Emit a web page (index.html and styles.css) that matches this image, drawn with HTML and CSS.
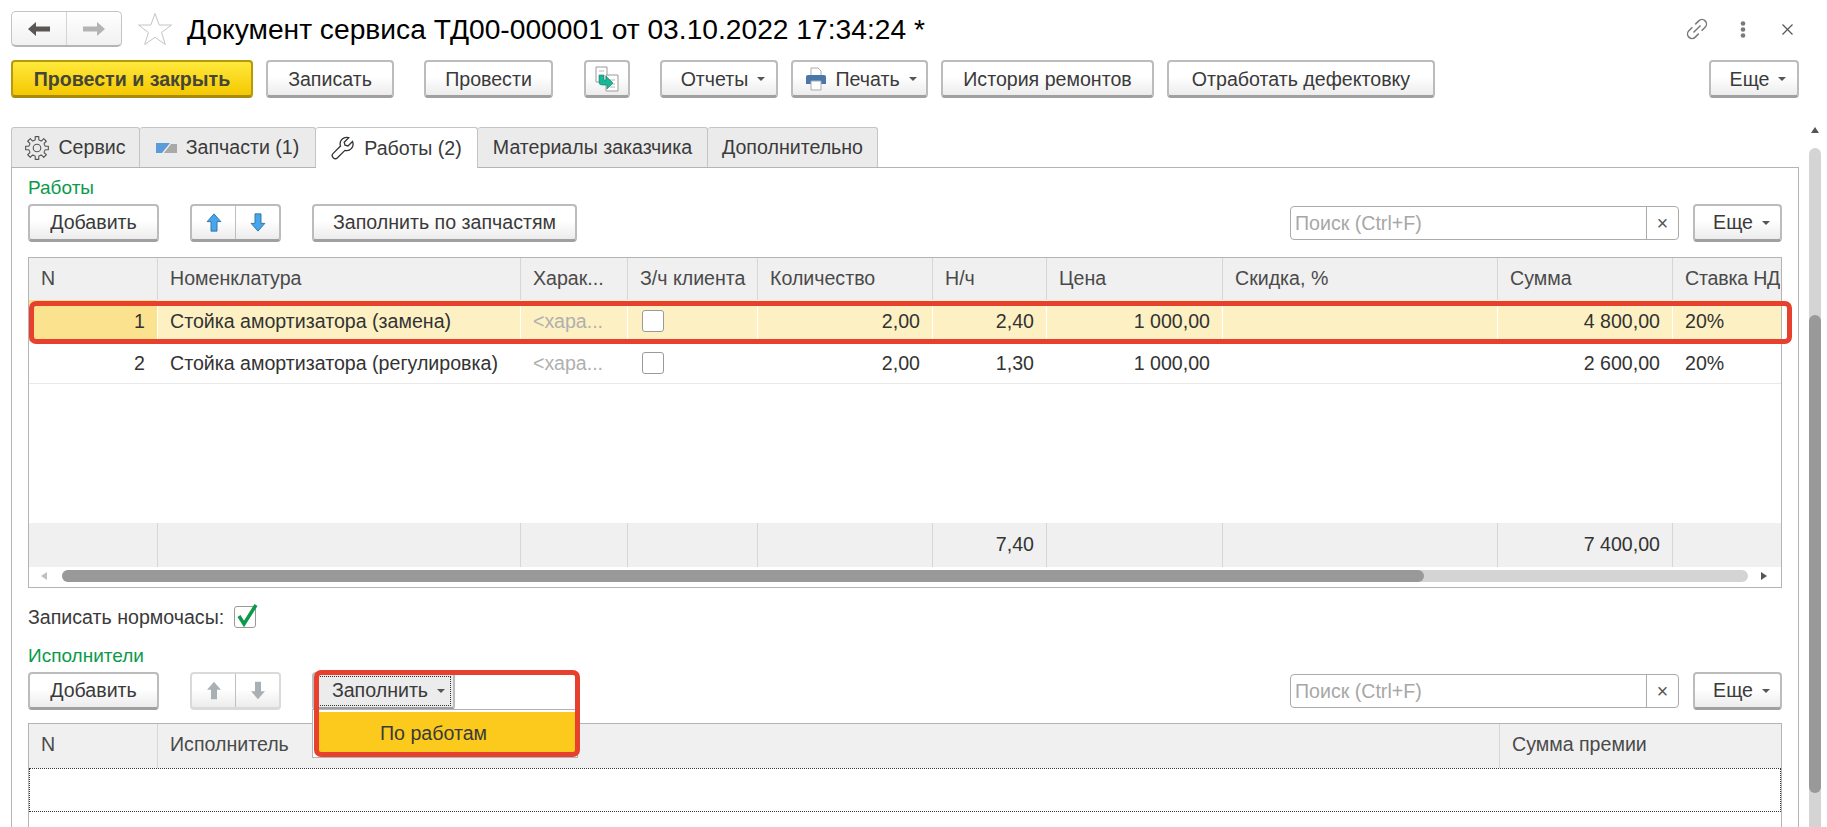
FILE: index.html
```html
<!DOCTYPE html>
<html lang="ru">
  <head>
    <meta charset="UTF-8" />
    <title>Документ сервиса ТД00-000001</title>
    <link rel="stylesheet" href="styles.css">
  </head>
  <body>
    <div class="form">
      <div class="title_row">
        <div class="nav_group">
          <span class="nav_btn">
            <svg width="22" height="14" viewBox="0 0 22 14"><path d="M0 7 8 0v4.500h14v5H8V14z" fill="#5a5654"/></svg>
          </span>
          <span class="nav_btn">
            <svg width="22" height="14" viewBox="0 0 22 14"><path d="M22 7 14 0v4.500H0v5h14V14z" fill="#b4b4b4"/></svg>
          </span>
        </div>
        <svg class="star" width="36" height="34" viewBox="0 0 36 34"><path d="M18 1.500 22.200 13H34.500L24.600 20.500 28.300 32.500 18 25.300 7.700 32.500 11.400 20.500 1.500 13H13.800z" fill="none" stroke="#c4c4c4"/></svg>
        <h1>Документ сервиса ТД00-000001 от 03.10.2022 17:34:24 *</h1>
        <div class="win_icons">
          <svg width="26" height="26" viewBox="0 0 26 26"><g transform="rotate(-45 13 13)" fill="none" stroke="#7a7a7a" stroke-width="1.500"><path d="M11 8.500H6a4.500 4.500 0 0 0 0 9h5"/><path d="M15 8.500h5a4.500 4.500 0 0 1 0 9h-5"/><path d="M8 13h10"/></g></svg>
          <svg width="6" height="17" viewBox="0 0 6 17"><g fill="#7a7a7a"><circle cx="3" cy="2.500" r="2.300"/><circle cx="3" cy="8.500" r="2.300"/><circle cx="3" cy="14.500" r="2.300"/></g></svg>
          <svg class="win_close" width="11" height="11" viewBox="0 0 11 11"><path d="M.5.500l10 10M10.500.500l-10 10" stroke="#555" stroke-width="1.200"/></svg>
        </div>
      </div>

      <div class="toolbar">
        <button class="btn btn_main w242">Провести и закрыть</button>
        <button class="btn ml13 w128">Записать</button>
        <button class="btn ml30 w129">Провести</button>
        <button class="btn ml31 w46">
          <svg width="26" height="26" viewBox="0 0 26 26">
            <path d="M2 1h11v15H2z" fill="#fff" stroke="#9a9a9a"/>
            <path d="M12 9h12v16H12z" fill="#fff" stroke="#9a9a9a"/>
            <path d="M5 5h5M16 14h5M16 18h5M16 21h5" stroke="#b5b5b5"/>
            <path d="M5 9h5v5h2v-4l7 7-6 6v-4H8q-3 0-3-3z" fill="#16b896" stroke="#1b7a66" stroke-width=".6"/>
          </svg>
        </button>
        <button class="btn ml30 w118 has_caret">Отчеты <i class="caret"></i></button>
        <button class="btn ml13 w137 print_btn">
          <svg width="22" height="24" viewBox="0 0 22 24">
            <path d="M6 1h7l3 3v7H6z" fill="#fff" stroke="#aaa"/>
            <path d="M1 10q0-2 2-2h16q2 0 2 2v7H1z" fill="#4a76a8"/>
            <path d="M6 14h10v9H6z" fill="#fff" stroke="#aaa"/>
          </svg>
          Печать <i class="caret"></i>
        </button>
        <button class="btn ml13 w213">История ремонтов</button>
        <button class="btn ml13 w268">Отработать дефектовку</button>
        <button class="btn w90 push has_caret">Еще <i class="caret"></i></button>
      </div>

      <div class="tabs">
        <div class="tab w129">
          <svg width="24" height="24" viewBox="0 0 24 24">
            <defs><path id="tooth" d="M8.940 4.610 10.230 3.690 10.200.640H13.800L13.770 3.690 15.060 4.610"/></defs>
            <g fill="none" stroke="#555" stroke-width="1.100" stroke-linejoin="round">
              <circle cx="12" cy="12" r="3.800"/>
              <use href="#tooth"/>
              <use href="#tooth" transform="rotate(45 12 12)"/>
              <use href="#tooth" transform="rotate(90 12 12)"/>
              <use href="#tooth" transform="rotate(135 12 12)"/>
              <use href="#tooth" transform="rotate(180 12 12)"/>
              <use href="#tooth" transform="rotate(225 12 12)"/>
              <use href="#tooth" transform="rotate(270 12 12)"/>
              <use href="#tooth" transform="rotate(315 12 12)"/>
            </g>
          </svg>
          Сервис
        </div>
        <div class="tab w176">
          <svg width="21" height="10" viewBox="0 0 21 10"><path d="M0 0h14L6 10H0z" fill="#5a9bd8"/><path d="M21 1v9H8l7-9z" fill="#a9a9a9"/></svg>
          Запчасти (1)
        </div>
        <div class="tab tab_on w162">
          <svg width="24" height="24" viewBox="0 0 24 24"><path d="M21.500 5.500 17 10l-3-.8-.8-3L17.700 1.700A6.500 6.500 0 0 0 9.500 10L2.200 17.400a3 3 0 0 0 4.300 4.300L13.900 14.400A6.500 6.500 0 0 0 21.500 5.500z" fill="#fff" stroke="#333" stroke-width="1.300"/></svg>
          Работы (2)
        </div>
        <div class="tab w230">Материалы заказчика</div>
        <div class="tab w170">Дополнительно</div>
      </div>

      <div class="panel">
        <div class="group_title">Работы</div>
        <div class="list_bar">
          <button class="btn w131">Добавить</button>
          <div class="btn_pair ml31">
            <span class="pair_btn">
              <svg width="16" height="19" viewBox="0 0 18 22"><path d="M9 1 17 10h-4.500v11h-7V10H1z" fill="#46a5ec" stroke="#2c6f9e"/></svg>
            </span>
            <span class="pair_btn">
              <svg width="16" height="19" viewBox="0 0 18 22"><path d="M9 21 1 12h4.500V1h7v11H17z" fill="#46a5ec" stroke="#2c6f9e"/></svg>
            </span>
          </div>
          <button class="btn ml31 w265">Заполнить по запчастям</button>
          <div class="search push">
            <span class="search_text">Поиск (Ctrl+F)</span>
            <span class="search_clear">×</span>
          </div>
          <button class="btn ml14 w89 has_caret">Еще <i class="caret"></i></button>
        </div>

        <div class="table work_table">
          <div class="row head">
            <div class="cell">N</div>
            <div class="cell">Номенклатура</div>
            <div class="cell">Харак...</div>
            <div class="cell">З/ч клиента</div>
            <div class="cell">Количество</div>
            <div class="cell">Н/ч</div>
            <div class="cell">Цена</div>
            <div class="cell">Скидка, %</div>
            <div class="cell">Сумма</div>
            <div class="cell last_head">Ставка НД</div>
          </div>
          <div class="row selected">
            <div class="cell num cur">1</div>
            <div class="cell">Стойка амортизатора (замена)</div>
            <div class="cell hint">&lt;хара...</div>
            <div class="cell check_cell"><span class="check"></span></div>
            <div class="cell num">2,00</div>
            <div class="cell num">2,40</div>
            <div class="cell num">1 000,00</div>
            <div class="cell"></div>
            <div class="cell num">4 800,00</div>
            <div class="cell">20%</div>
          </div>
          <div class="row">
            <div class="cell num">2</div>
            <div class="cell">Стойка амортизатора (регулировка)</div>
            <div class="cell hint">&lt;хара...</div>
            <div class="cell check_cell"><span class="check"></span></div>
            <div class="cell num">2,00</div>
            <div class="cell num">1,30</div>
            <div class="cell num">1 000,00</div>
            <div class="cell"></div>
            <div class="cell num">2 600,00</div>
            <div class="cell">20%</div>
          </div>
          <div class="table_space"></div>
          <div class="row foot">
            <div class="cell"></div>
            <div class="cell"></div>
            <div class="cell"></div>
            <div class="cell"></div>
            <div class="cell"></div>
            <div class="cell num">7,40</div>
            <div class="cell"></div>
            <div class="cell"></div>
            <div class="cell num">7 400,00</div>
            <div class="cell"></div>
          </div>
          <div class="hscroll">
            <i class="arrow_l"></i>
            <div class="hscroll_track"><div class="hscroll_thumb"></div></div>
            <i class="arrow_r"></i>
          </div>
          <div class="red_box row_mark"></div>
        </div>

        <div class="hours_row">
          Записать нормочасы:
          <span class="check checked">
            <svg width="24" height="24" viewBox="0 0 24 24"><path d="M3 12l5 8L20 1" fill="none" stroke="#0a9a4a" stroke-width="3.500"/></svg>
          </span>
        </div>

        <div class="group_title second">Исполнители</div>
        <div class="list_bar">
          <button class="btn w131">Добавить</button>
          <div class="btn_pair ml31 off">
            <span class="pair_btn">
              <svg width="16" height="19" viewBox="0 0 18 22"><path d="M9 1 17 10h-4.500v11h-7V10H1z" fill="#a9b0b3"/></svg>
            </span>
            <span class="pair_btn">
              <svg width="16" height="19" viewBox="0 0 18 22"><path d="M9 21 1 12h4.500V1h7v11H17z" fill="#a9b0b3"/></svg>
            </span>
          </div>
          <div class="fill_wrap ml31">
            <button class="btn btn_open w143"><span class="dotted">Заполнить <i class="caret"></i></span></button>
            <div class="menu">
              <div class="menu_item">По работам</div>
            </div>
            <div class="red_box menu_mark"></div>
          </div>
          <div class="search push">
            <span class="search_text">Поиск (Ctrl+F)</span>
            <span class="search_clear">×</span>
          </div>
          <button class="btn ml14 w89 has_caret">Еще <i class="caret"></i></button>
        </div>

        <div class="table staff_table">
          <div class="row head">
            <div class="cell">N</div>
            <div class="cell">Исполнитель</div>
            <div class="cell">Сумма премии</div>
          </div>
          <div class="empty_row"></div>
        </div>
      </div>

      <div class="vscroll">
        <i class="arrow_up"></i>
        <div class="vscroll_track"><div class="vscroll_thumb"></div></div>
      </div>
    </div>
  </body>
</html>
```

FILE: styles.css
```css
html,
body {
  margin: 0;
  height: 827px;
  overflow: hidden;
  background: #fff;
}
body {
  font-family: "Liberation Sans", Arial, sans-serif;
  font-size: 19.6px;
  color: #3a3a3a;
}
.form {
  position: relative;
  height: 827px;
  overflow: hidden;
  padding: 11px 28px 0 11px;
  box-sizing: border-box;
}

/* title */
.title_row {
  display: flex;
  align-items: center;
  height: 36px;
}
.nav_group {
  display: flex;
  width: 111px;
  height: 36px;
  box-sizing: border-box;
  border: 1px solid #c4c4c4;
  border-bottom: 2px solid #b5b5b5;
  border-radius: 5px;
  background: linear-gradient(#fff, #f1f1f1);
}
.nav_btn {
  flex: 1;
  display: flex;
  align-items: center;
  justify-content: center;
}
.nav_btn + .nav_btn {
  border-left: 1px solid #d4d4d4;
}
.star {
  margin-left: 15px;
}
h1 {
  margin: 0 0 0 14px;
  font-size: 28.2px;
  font-weight: normal;
  color: #000;
  white-space: nowrap;
}
.win_icons {
  margin-left: auto;
  margin-right: 6px;
  display: flex;
  align-items: center;
  gap: 30px;
}
.win_close {
  margin-left: 6px;
}

/* buttons */
.btn {
  height: 38px;
  padding: 0;
  box-sizing: border-box;
  border: 2px solid #bcbcbc;
  border-bottom: 3px solid #a0a0a0;
  border-radius: 4px;
  background: linear-gradient(#fff 45%, #ececec);
  font: inherit;
  color: #3a3a3a;
  display: inline-flex;
  align-items: center;
  justify-content: center;
  gap: 8px;
  flex: none;
}
.btn_main {
  border: 2px solid #b59a10;
  border-bottom: 3px solid #a58a0c;
  background: linear-gradient(#ffe93c, #f5c800);
  font-weight: bold;
  color: #454538;
}
.has_caret {
  padding-left: 8px;
}
.print_btn {
  padding-left: 3px;
}
.toolbar .btn {
  padding-top: 1px;
}
.caret {
  display: inline-block;
  border-top: 4px solid #555;
  border-left: 4px solid transparent;
  border-right: 4px solid transparent;
  margin-left: 1px;
}
.toolbar {
  display: flex;
  margin-top: 13px;
}
.push {
  margin-left: auto;
}
.ml13 { margin-left: 13px; }
.ml14 { margin-left: 14px; }
.ml30 { margin-left: 30px; }
.ml31 { margin-left: 31px; }
.w46 { width: 46px; }
.w89 { width: 89px; }
.w90 { width: 90px; }
.w118 { width: 118px; }
.w128 { width: 128px; }
.w129 { width: 129px; }
.w131 { width: 131px; }
.w137 { width: 137px; }
.w143 { width: 143px; }
.w162 { width: 162px; }
.w170 { width: 170px; }
.w176 { width: 176px; }
.w213 { width: 213px; }
.w230 { width: 230px; }
.w242 { width: 242px; }
.w265 { width: 265px; }
.w268 { width: 268px; }

/* tabs */
.tabs {
  display: flex;
  margin-top: 29px;
  height: 40px;
}
.tab {
  box-sizing: border-box;
  height: 40px;
  border: 1px solid #c4c4c4;
  border-bottom: none;
  border-left-width: 0;
  border-radius: 3px 3px 0 0;
  background: #ebebeb;
  display: flex;
  align-items: center;
  justify-content: center;
  gap: 9px;
  white-space: nowrap;
}
.tab:first-child {
  border-left-width: 1px;
}
.tab_on {
  background: #fff;
  height: 41px;
  position: relative;
  z-index: 1;
}
.panel {
  height: 700px;
  box-sizing: border-box;
  border: 1px solid #b4b4b4;
  padding: 0 16px;
}
.group_title {
  color: #0a9a4a;
  font-size: 19px;
  line-height: 20px;
  margin-top: 10px;
}
.group_title.second {
  margin-top: 17px;
}
.list_bar {
  display: flex;
  align-items: center;
  height: 38px;
  margin-top: 6px;
}
.btn_pair {
  display: flex;
  width: 91px;
  height: 38px;
  box-sizing: border-box;
  border: 2px solid #bcbcbc;
  border-bottom: 3px solid #a0a0a0;
  border-radius: 4px;
  background: linear-gradient(#fff 45%, #ececec);
  flex: none;
}
.btn_pair.off {
  border-color: #dadada;
}
.pair_btn {
  flex: 1;
  display: flex;
  align-items: center;
  justify-content: center;
}
.pair_btn + .pair_btn {
  border-left: 1px solid #bfbfbf;
}
.search {
  display: flex;
  width: 389px;
  height: 34px;
  box-sizing: border-box;
  border: 1px solid #ababab;
  border-radius: 4px;
}
.search_text {
  flex: 1;
  padding-left: 4px;
  line-height: 32px;
  color: #a7a7a7;
}
.search_clear {
  width: 31px;
  border-left: 1px solid #ababab;
  text-align: center;
  line-height: 32px;
  color: #555;
}

/* tables */
.table {
  position: relative;
  box-sizing: border-box;
  width: 1754px;
  border: 1px solid #b4b4b4;
  margin-top: 15px;
}
.row {
  display: grid;
  grid-template-columns: 128px 363px 107px 130px 175px 114px 176px 275px 175px 108px;
  height: 42px;
  border-bottom: 1px solid #e9e9e9;
  box-sizing: border-box;
}
.staff_table .row {
  grid-template-columns: 128px 1342px 282px;
}
.cell {
  box-sizing: border-box;
  padding: 0 12px;
  line-height: 43px;
  white-space: nowrap;
  overflow: hidden;
  color: #333;
}
.cell + .cell {
  border-left: 1px solid transparent;
}
.head {
  height: 42px;
  background: #f0f0f0;
  border-bottom: none;
}
.staff_table .head {
  height: 44px;
}
.head .cell + .cell,
.foot .cell + .cell {
  border-left-color: #d6d6d6;
}
.head .cell {
  color: #4a4a4a;
  line-height: 41px;
}
.last_head {
  padding-right: 0;
  letter-spacing: -0.2px;
}
.num {
  text-align: right;
}
.hint {
  color: #b0b0b0;
}
.selected {
  background: #fdf1c3;
}
.selected .cell + .cell {
  border-left-color: #fff;
}
.cur {
  background: #fbe28f;
}
.check_cell {
  display: flex;
  align-items: center;
  padding-left: 14px;
}
.check {
  display: inline-block;
  width: 22px;
  height: 22px;
  box-sizing: border-box;
  border: 1px solid #9a9a9a;
  border-radius: 3px;
  background: #fff;
  flex: none;
}
.table_space {
  height: 139px;
}
.foot {
  height: 44px;
  background: #f0f0f0;
  border-bottom: none;
}
.hscroll {
  display: flex;
  align-items: center;
  height: 20px;
  padding-bottom: 2px;
  box-sizing: border-box;
}
.hscroll_track {
  margin-left: 15px;
  width: 1686px;
  height: 12px;
  border-radius: 6px;
  background: #d4d4d4;
}
.hscroll_thumb {
  width: 1362px;
  height: 12px;
  border-radius: 6px;
  background: #999;
}
.arrow_l {
  margin-left: 12px;
  border-right: 6px solid #c0c0c0;
  border-top: 4px solid transparent;
  border-bottom: 4px solid transparent;
}
.arrow_r {
  margin-left: 13px;
  border-left: 6px solid #555;
  border-top: 4px solid transparent;
  border-bottom: 4px solid transparent;
}

/* red marks lie over the screen */
.red_box {
  position: absolute;
  box-sizing: border-box;
  border: 5px solid #e8402f;
  border-radius: 7px;
  pointer-events: none;
}
.row_mark {
  left: 0;
  top: 43px;
  width: 1763px;
  height: 43px;
}
.hours_row {
  display: flex;
  align-items: center;
  gap: 10px;
  height: 24px;
  margin-top: 17px;
}
.checked {
  position: relative;
}
.checked svg {
  position: absolute;
  left: 1px;
  top: -3px;
}

/* open menu */
.fill_wrap {
  position: relative;
  flex: none;
}
.btn_open {
  background: #ececec;
}
.dotted {
  display: flex;
  align-items: center;
  justify-content: center;
  gap: 8px;
  box-sizing: border-box;
  width: 133px;
  height: 28px;
  padding-left: 10px;
  outline: 1px dotted #333;
}
.menu {
  position: absolute;
  left: 0;
  top: 37px;
  z-index: 2;
  width: 266px;
  height: 49px;
  box-sizing: border-box;
  padding: 2px 2px 5px 5px;
  background: #fff;
  border: 1px solid #b4b4b4;
}
.menu_item {
  height: 40px;
  line-height: 43px;
  padding-left: 62px;
  background: #fbca1c;
  color: #3a3a3a;
}
.menu_mark {
  left: 2px;
  top: -2px;
  z-index: 3;
  width: 266px;
  height: 87px;
}
.staff_table {
  height: 200px;
  margin-top: 13px;
}
.empty_row {
  height: 44px;
  box-sizing: border-box;
  border: 1px dotted #333;
}

/* page scroll */
.vscroll {
  position: absolute;
  left: 1809px;
  top: 127px;
  width: 12px;
}
.arrow_up {
  display: block;
  margin: 0 auto;
  width: 0;
  border-bottom: 6px solid #555;
  border-left: 4px solid transparent;
  border-right: 4px solid transparent;
}
.vscroll_track {
  margin-top: 15px;
  height: 700px;
  border-radius: 6px;
  background: #d4d4d4;
  padding-top: 167px;
  box-sizing: border-box;
}
.vscroll_thumb {
  height: 478px;
  border-radius: 6px;
  background: #999;
}
```
